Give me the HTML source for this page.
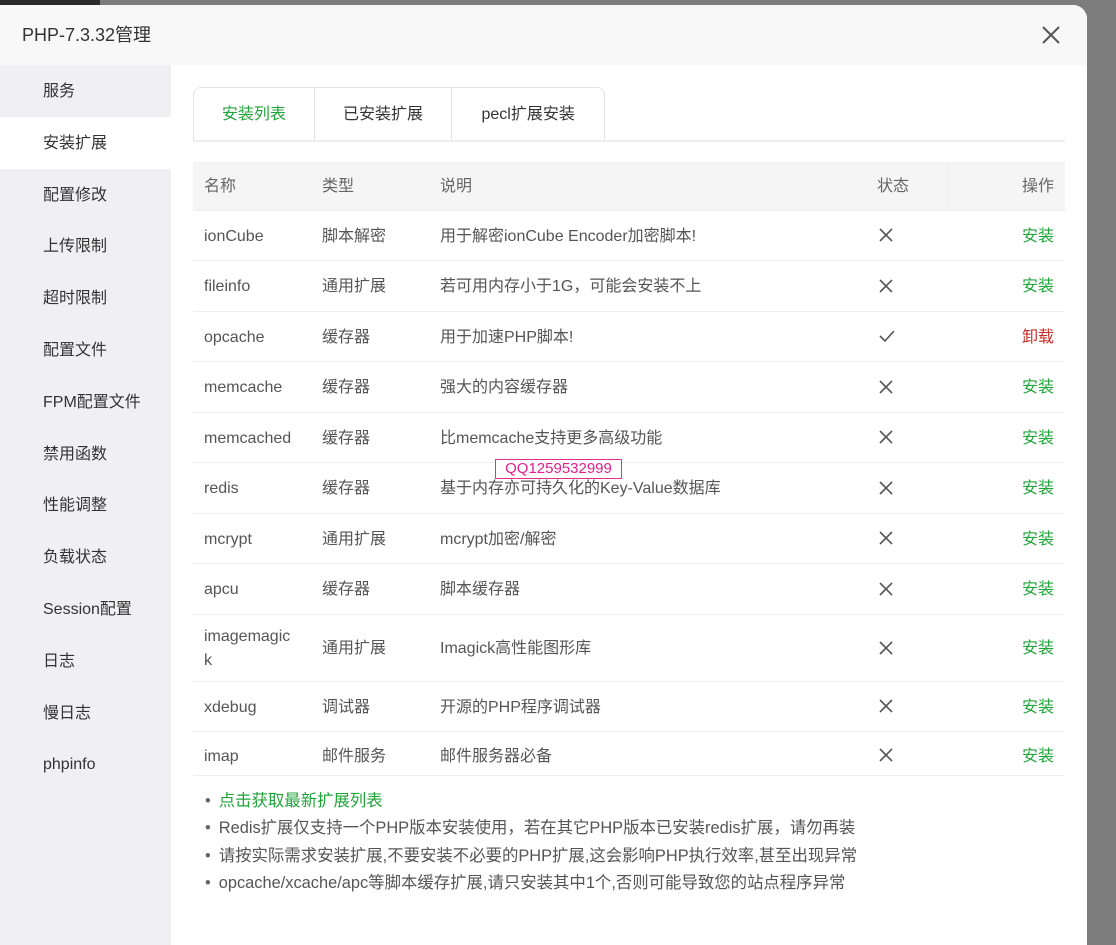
<!DOCTYPE html>
<html><head><meta charset="utf-8"><style>
*{margin:0;padding:0;box-sizing:border-box}
body{width:1116px;height:938px;background:#7d7d7d;font-family:"Liberation Sans","Noto Sans CJK SC",sans-serif;color:#555;font-size:16px;position:relative;overflow:hidden}
.topbar{position:absolute;left:0;top:0;width:100px;height:6px;background:#2b2b2b}
.dlg{position:absolute;left:0;top:5px;width:1087px;height:940px;background:#fff;border-radius:0 14px 0 0;overflow:hidden}
.hd{height:60px;background:#f8f8f8;font-size:18px;color:#333;padding:19px 0 0 22px;line-height:22px}
.x{position:absolute;right:26px;top:20px;width:20px;height:20px}
.nav{position:absolute;left:0;top:60px;width:171px;height:880px;background:#f0f0f2}
.nav div{height:51.8px;line-height:53px;padding-left:43px;font-size:16px;color:#333}
.nav .on{background:#fff}
.ct{position:absolute;left:193px;top:60px;width:872px}
.tabs{position:absolute;top:22px;left:0;height:54px;border:1px solid #e4e4e4;border-bottom:none;border-radius:8px 8px 0 0;display:flex;width:412px}
.tabs div{height:53px;line-height:54px;text-align:center;font-size:16px;color:#333;border-right:1px solid #e4e4e4}
.tabs div:last-child{border-right:none}
.line{position:absolute;top:75px;left:0;width:872px;height:2px;background:#eee}
table{position:absolute;top:97px;left:0;width:872px;border-collapse:collapse;font-size:16px;table-layout:fixed}
th{background:#f5f5f5;height:48px;font-weight:normal;text-align:left;color:#666;padding:2px 0 0 11px;border-bottom:1px solid #eee;line-height:20px;vertical-align:middle}
td{height:50.5px;padding:3px 0 0 11px;border-bottom:1px solid #eee;color:#555;line-height:20px;vertical-align:middle}
tr.last td{height:44px;padding-top:7px}
tr.last td.ic{padding-top:2px}
tr.tall td{height:67px}
.g{color:#20a53a}.r{color:#c9302c}
.ic{padding-left:13px;padding-top:0}
.ic svg{display:block}
.op{text-align:right;padding-right:11px}
.notes{position:absolute;top:723px;left:12px;font-size:16.4px;line-height:27.3px;color:#555}
.notes div:before{content:"•";margin-right:8px;color:#666}
.wm{position:absolute;left:495px;top:459px;width:127px;height:20px;border:1px solid #e0308c;color:#e0208c;font-size:15px;text-align:center;line-height:18px;background:#fff}
</style></head><body>
<div class="topbar"></div>
<div class="dlg">
<div class="hd">PHP-7.3.32管理</div>
<svg class="x" viewBox="0 0 20 20"><path d="M2 2L18 18M18 2L2 18" stroke="#555" stroke-width="2"/></svg>
<div class="nav">
<div>服务</div><div class="on">安装扩展</div><div>配置修改</div><div>上传限制</div><div>超时限制</div><div>配置文件</div><div>FPM配置文件</div><div>禁用函数</div><div>性能调整</div><div>负载状态</div><div>Session配置</div><div>日志</div><div>慢日志</div><div>phpinfo</div>
</div>
<div class="ct">
<div class="tabs"><div style="width:121px;color:#20a53a">安装列表</div><div style="width:138px">已安装扩展</div><div style="width:152px">pecl扩展安装</div></div>
<div class="line"></div>
<table>
<colgroup><col style="width:118px"><col style="width:118px"><col style="width:437px"><col style="width:82px"><col style="width:117px"></colgroup>
<tr><th>名称</th><th>类型</th><th>说明</th><th style="border-right:1px solid #eee">状态</th><th class="op" style="text-align:right">操作</th></tr>
<tr><td>ionCube</td><td>脚本解密</td><td>用于解密ionCube Encoder加密脚本!</td><td class="ic"><svg width="14" height="14"><path d="M1 1L13 13M13 1L1 13" stroke="#555" stroke-width="1.6"/></svg></td><td class="op g">安装</td></tr>
<tr><td>fileinfo</td><td>通用扩展</td><td>若可用内存小于1G，可能会安装不上</td><td class="ic"><svg width="14" height="14"><path d="M1 1L13 13M13 1L1 13" stroke="#555" stroke-width="1.6"/></svg></td><td class="op g">安装</td></tr>
<tr><td>opcache</td><td>缓存器</td><td>用于加速PHP脚本!</td><td class="ic"><svg width="16" height="14"><path d="M1 7L6 12L15 2" stroke="#555" stroke-width="1.6" fill="none"/></svg></td><td class="op r">卸载</td></tr>
<tr><td>memcache</td><td>缓存器</td><td>强大的内容缓存器</td><td class="ic"><svg width="14" height="14"><path d="M1 1L13 13M13 1L1 13" stroke="#555" stroke-width="1.6"/></svg></td><td class="op g">安装</td></tr>
<tr><td>memcached</td><td>缓存器</td><td>比memcache支持更多高级功能</td><td class="ic"><svg width="14" height="14"><path d="M1 1L13 13M13 1L1 13" stroke="#555" stroke-width="1.6"/></svg></td><td class="op g">安装</td></tr>
<tr><td>redis</td><td>缓存器</td><td>基于内存亦可持久化的Key-Value数据库</td><td class="ic"><svg width="14" height="14"><path d="M1 1L13 13M13 1L1 13" stroke="#555" stroke-width="1.6"/></svg></td><td class="op g">安装</td></tr>
<tr><td>mcrypt</td><td>通用扩展</td><td>mcrypt加密/解密</td><td class="ic"><svg width="14" height="14"><path d="M1 1L13 13M13 1L1 13" stroke="#555" stroke-width="1.6"/></svg></td><td class="op g">安装</td></tr>
<tr><td>apcu</td><td>缓存器</td><td>脚本缓存器</td><td class="ic"><svg width="14" height="14"><path d="M1 1L13 13M13 1L1 13" stroke="#555" stroke-width="1.6"/></svg></td><td class="op g">安装</td></tr>
<tr class="tall"><td style="line-height:24px">imagemagic<br>k</td><td>通用扩展</td><td>Imagick高性能图形库</td><td class="ic"><svg width="14" height="14"><path d="M1 1L13 13M13 1L1 13" stroke="#555" stroke-width="1.6"/></svg></td><td class="op g">安装</td></tr>
<tr><td>xdebug</td><td>调试器</td><td>开源的PHP程序调试器</td><td class="ic"><svg width="14" height="14"><path d="M1 1L13 13M13 1L1 13" stroke="#555" stroke-width="1.6"/></svg></td><td class="op g">安装</td></tr>
<tr class="last"><td>imap</td><td>邮件服务</td><td>邮件服务器必备</td><td class="ic"><svg width="14" height="14"><path d="M1 1L13 13M13 1L1 13" stroke="#555" stroke-width="1.6"/></svg></td><td class="op g">安装</td></tr>
</table>
<div class="notes">
<div><span class="g">点击获取最新扩展列表</span></div>
<div>Redis扩展仅支持一个PHP版本安装使用，若在其它PHP版本已安装redis扩展，请勿再装</div>
<div>请按实际需求安装扩展,不要安装不必要的PHP扩展,这会影响PHP执行效率,甚至出现异常</div>
<div>opcache/xcache/apc等脚本缓存扩展,请只安装其中1个,否则可能导致您的站点程序异常</div>
</div>
</div>
</div>
<div class="wm">QQ1259532999</div>
</body></html>
